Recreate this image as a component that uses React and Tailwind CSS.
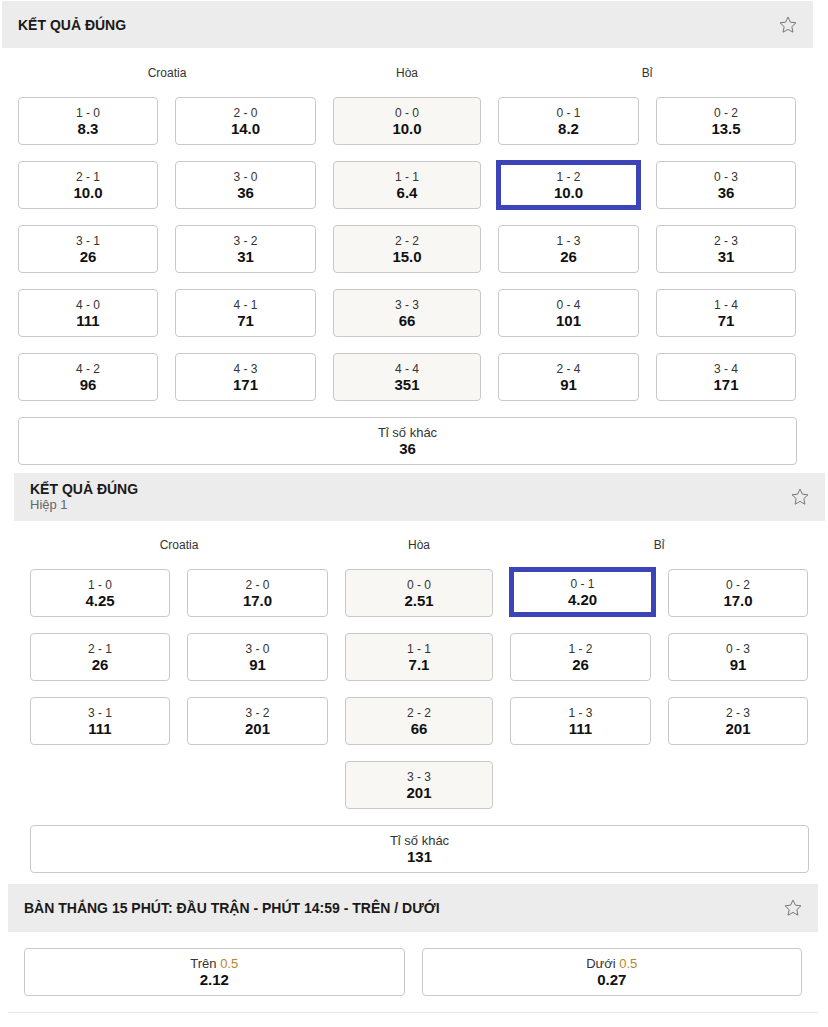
import React from "react";

function StarIcon() {
  return (
    <svg width="20" height="20" viewBox="0 0 24 24" fill="none" stroke="#6b6b6b" strokeWidth="1.1" strokeLinejoin="round">
      <path d="M12 2.5l2.9 6.1 6.6.8-4.9 4.6 1.3 6.6L12 17.3l-5.9 3.3 1.3-6.6-4.9-4.6 6.6-.8z" />
    </svg>
  );
}

function Cell({ s, o, draw, selClass }) {
  if (selClass) {
    return (
      <div className={"flex flex-col items-center justify-center bg-white border-[5px] border-[#3d44b8] " + selClass}>
        <div className="text-[12px] leading-4 text-[#333]">{s}</div>
        <div className="text-[15px] leading-4 font-bold text-[#111]">{o}</div>
      </div>
    );
  }
  return (
    <div
      className={
        "h-12 flex flex-col items-center justify-center rounded-[4px] border border-[#c9c9c9] " +
        (draw ? "bg-[#f8f7f4]" : "bg-white")
      }
    >
      <div className="text-[12px] leading-4 text-[#333]">{s}</div>
      <div className="text-[15px] leading-4 font-bold text-[#111]">{o}</div>
    </div>
  );
}

function Header({ title, sub, h }) {
  return (
    <div className={"flex items-center justify-between bg-[#ececec] pl-4 pr-[15px] " + h}>
      <div>
        <div className="text-[14px] leading-4 font-bold text-[#1a1a1a]">{title}</div>
        {sub && <div className="text-[13px] leading-4 text-[#666]">{sub}</div>}
      </div>
      <StarIcon />
    </div>
  );
}

const grid = "grid grid-cols-[140px_141px_148px_141px_140px] gap-x-[17px]";

function Labels({ h }) {
  return (
    <div className={grid + " items-center text-[12px] text-[#333] " + h}>
      <div className="col-span-2 text-center">Croatia</div>
      <div className="text-center">Hòa</div>
      <div className="col-span-2 text-center">Bỉ</div>
    </div>
  );
}

function Wide({ top, o }) {
  return (
    <div className="h-12 flex flex-col items-center justify-center rounded-[4px] border border-[#c9c9c9] bg-white">
      <div className="text-[13px] leading-4 text-[#333]">{top}</div>
      <div className="text-[15px] leading-4 font-bold text-[#111]">{o}</div>
    </div>
  );
}

export default function App() {
  const rows1 = [
    [["1 - 0", "8.3"], ["2 - 0", "14.0"], ["0 - 0", "10.0"], ["0 - 1", "8.2"], ["0 - 2", "13.5"]],
    [["2 - 1", "10.0"], ["3 - 0", "36"], ["1 - 1", "6.4"], ["1 - 2", "10.0"], ["0 - 3", "36"]],
    [["3 - 1", "26"], ["3 - 2", "31"], ["2 - 2", "15.0"], ["1 - 3", "26"], ["2 - 3", "31"]],
    [["4 - 0", "111"], ["4 - 1", "71"], ["3 - 3", "66"], ["0 - 4", "101"], ["1 - 4", "71"]],
    [["4 - 2", "96"], ["4 - 3", "171"], ["4 - 4", "351"], ["2 - 4", "91"], ["3 - 4", "171"]],
  ];
  const rows2 = [
    [["1 - 0", "4.25"], ["2 - 0", "17.0"], ["0 - 0", "2.51"], ["0 - 1", "4.20"], ["0 - 2", "17.0"]],
    [["2 - 1", "26"], ["3 - 0", "91"], ["1 - 1", "7.1"], ["1 - 2", "26"], ["0 - 3", "91"]],
    [["3 - 1", "111"], ["3 - 2", "201"], ["2 - 2", "66"], ["1 - 3", "111"], ["2 - 3", "201"]],
  ];

  return (
    <div className="w-[828px] min-h-[1027px] bg-white font-['Liberation_Sans',Arial,sans-serif] pt-[1px]">
      {/* Section 1 */}
      <div className="w-[811px] ml-[2px]">
        <Header title="KẾT QUẢ ĐÚNG" h="h-[47px]" />
        <div className="px-4">
          <Labels h="h-[49px]" />
          <div className={grid + " gap-y-4"}>
            {rows1.map((r, ri) =>
              r.map((c, ci) => (
                <Cell
                  key={ri + "-" + ci}
                  s={c[0]}
                  o={c[1]}
                  draw={ci === 2}
                  selClass={ri === 1 && ci === 3 ? "h-[50px] -mx-[2px] -my-[1px]" : null}
                />
              ))
            )}
          </div>
          <div className="mt-4">
            <Wide top="Tỉ số khác" o="36" />
          </div>
        </div>
      </div>

      {/* Section 2 */}
      <div className="w-[811px] ml-[14px] mt-2">
        <Header title="KẾT QUẢ ĐÚNG" sub="Hiệp 1" h="h-[48px]" />
        <div className="px-4">
          <Labels h="h-[48px]" />
          <div className={grid + " gap-y-4"}>
            {rows2.map((r, ri) =>
              r.map((c, ci) => (
                <Cell
                  key={ri + "-" + ci}
                  s={c[0]}
                  o={c[1]}
                  draw={ci === 2}
                  selClass={ri === 0 && ci === 3 ? "h-[50px] -ml-[1px] -mr-[5px] -mt-[2px]" : null}
                />
              ))
            )}
            <div className="col-start-3">
              <Cell s="3 - 3" o="201" draw />
            </div>
          </div>
          <div className="mt-4">
            <Wide top="Tỉ số khác" o="131" />
          </div>
        </div>
      </div>

      {/* Section 3 */}
      <div className="w-[810px] ml-[8px] mt-[11px] border-b border-[#e6e6e6]">
        <Header title="BÀN THẮNG 15 PHÚT: ĐẦU TRẬN - PHÚT 14:59 - TRÊN / DƯỚI" h="h-[48px]" />
        <div className="px-4 py-4 grid grid-cols-2 gap-x-[17px]">
          <Wide
            top={
              <>
                Trên <span className="text-[#b8862e]">0.5</span>
              </>
            }
            o="2.12"
          />
          <Wide
            top={
              <>
                Dưới <span className="text-[#b8862e]">0.5</span>
              </>
            }
            o="0.27"
          />
        </div>
      </div>
    </div>
  );
}
